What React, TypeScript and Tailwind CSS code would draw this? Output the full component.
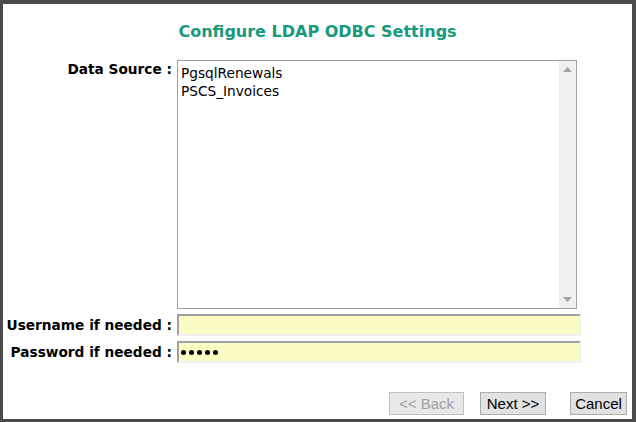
import React from 'react';

const font = { fontFamily: '"DejaVu Sans", Verdana, sans-serif' };

function Field({ label, children }: { label: string; children?: React.ReactNode }) {
  return (
    <>
      <div className="flex items-center justify-end pr-[5px] text-[13.7px] font-bold text-black">{label}</div>
      <div className="h-[22px] w-[404px] border-2 border-t-[#a0a0a0] border-l-[#a0a0a0] border-b-[#f0f0f0] border-r-[#f0f0f0] bg-[#fafcc4] flex items-center pl-[2px]">
        {children}
      </div>
    </>
  );
}

function Button({ label, disabled, width }: { label: string; disabled?: boolean; width: string }) {
  return (
    <button
      className={`h-[23px] ${width} border border-[#adadad] bg-[#e1e1e1] text-[15px] leading-none ${
        disabled ? 'text-[#a0a0a0] border-[#c0c0c0] bg-[#e8e8e8]' : 'text-black'
      }`}
      style={{ fontFamily: '"Liberation Sans", Arial, sans-serif' }}
      disabled={disabled}
    >
      {label}
    </button>
  );
}

export default function App() {
  return (
    <div
      className="w-[636px] h-[422px] bg-white border-t-4 border-l-[3px] border-r-4 border-b-[3px] border-[#4b4b4b] flex flex-col"
      style={font}
    >
      {/* Title */}
      <div className="h-[56px] flex items-center justify-center">
        <h1 className="text-[16px] font-bold text-[#17997a]">Configure LDAP ODBC Settings</h1>
      </div>

      <div className="grid grid-cols-[174px_1fr] gap-y-[5px]">
        {/* Data source list */}
        <div className="pr-[5px] text-right text-[13.7px] leading-[18px] font-bold text-black">Data Source :</div>
        <div className="h-[249px] w-[400px] border border-[#a0a0a0] flex">
          <div className="flex-1 pl-[3px] pt-[3px] text-[13.7px] leading-[18px] text-black">
            <div>PgsqlRenewals</div>
            <div>PSCS_Invoices</div>
          </div>
          <div className="w-[17px] bg-[#f0f0f0] flex flex-col items-center justify-between py-[6px]">
            <svg width="9" height="5" viewBox="0 0 9 5">
              <path d="M0 5 L4.5 0 L9 5 Z" fill="#a3a3a3" />
            </svg>
            <svg width="9" height="5" viewBox="0 0 9 5">
              <path d="M0 0 L4.5 5 L9 0 Z" fill="#a3a3a3" />
            </svg>
          </div>
        </div>

        <Field label="Username if needed :" />
        <Field label="Password if needed :">
          <span className="flex gap-[3px]">
            {[0, 1, 2, 3, 4].map((i) => (
              <span key={i} className="block w-[5px] h-[5px] rounded-full bg-black" />
            ))}
          </span>
        </Field>
      </div>

      {/* Buttons */}
      <div className="mt-[29px] flex justify-end pr-[5px]">
        <Button label="<< Back" disabled width="w-[75px]" />
        <div className="w-[16px]" />
        <Button label="Next >>" width="w-[66px]" />
        <div className="w-[24px]" />
        <Button label="Cancel" width="w-[57px]" />
      </div>
    </div>
  );
}
